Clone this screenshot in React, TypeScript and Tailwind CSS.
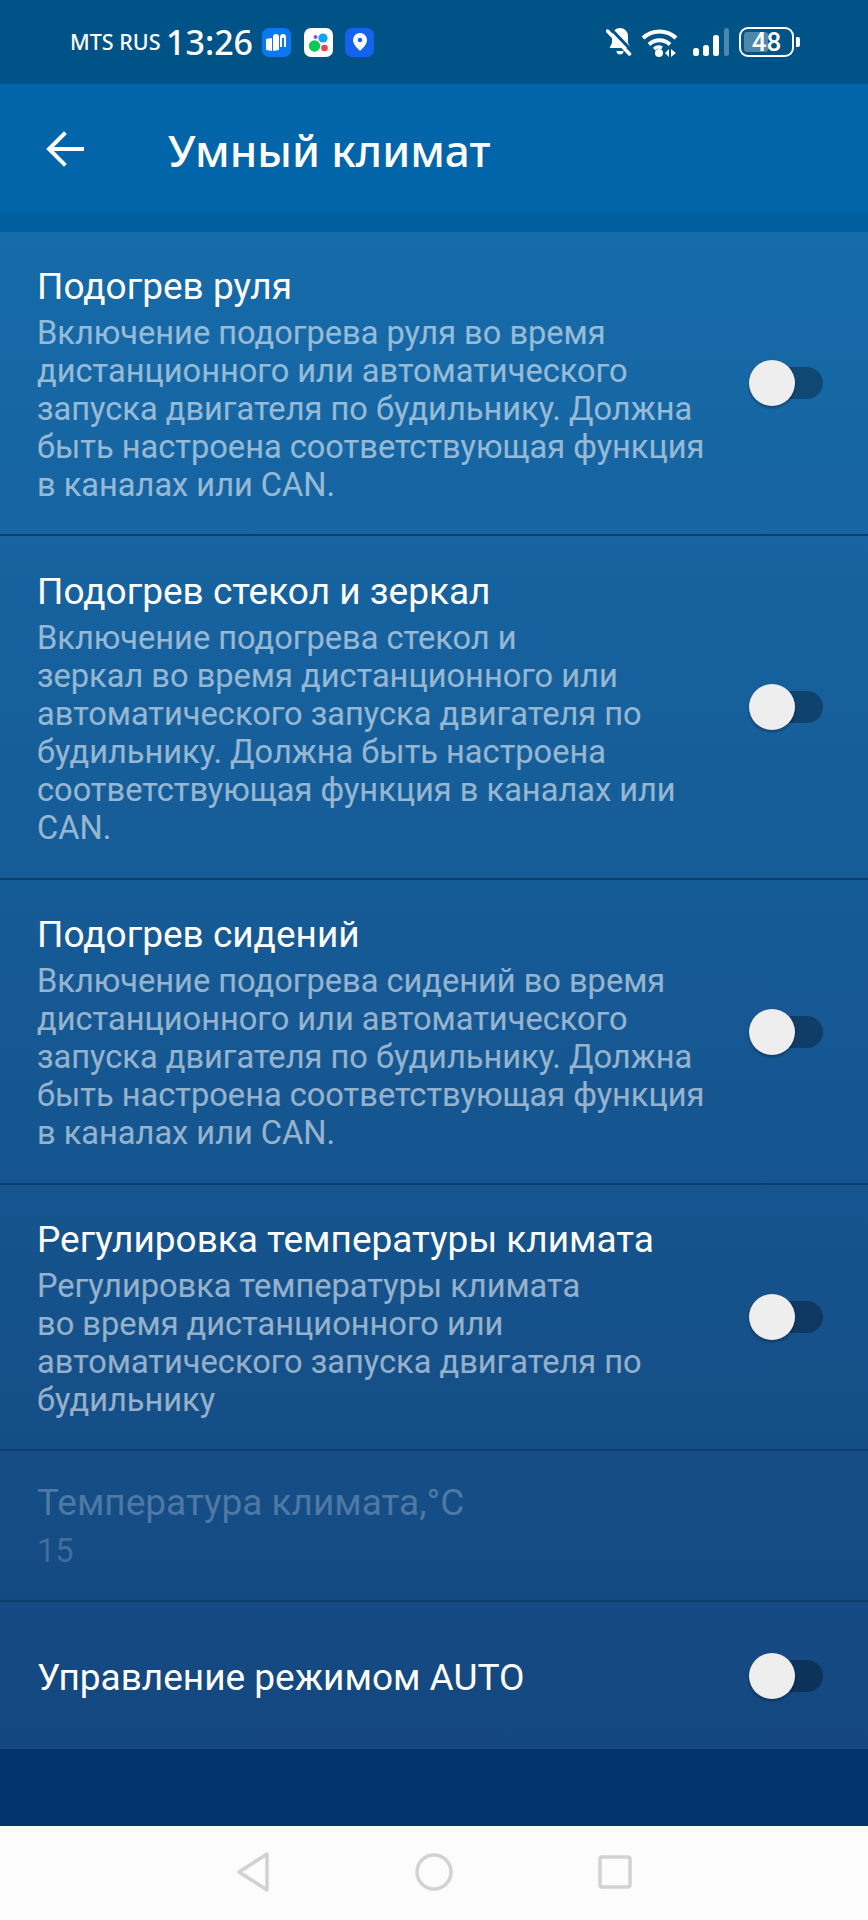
import React from 'react'

const font = { fontFamily: '"Roboto", "Noto Sans", sans-serif' }

function Toggle() {
  return (
    <div className="relative w-[74px] h-[32px] shrink-0 rounded-full bg-black/30">
      <div className="absolute left-0 top-[-7px] w-[46px] h-[46px] rounded-full bg-[#eeeeee] shadow-[0_2px_3px_rgba(0,0,0,0.3)]" />
    </div>
  )
}

function Row({ title, lines, rowClass }: { title: string; lines: string[]; rowClass: string }) {
  return (
    <div className={"flex items-center justify-between pl-[37px] pr-[45px] border-b-2 border-[#0f3d6d] " + rowClass}>
      <div className="pt-[2px]">
        <div className="text-[37px] leading-[44px] text-white">{title}</div>
        <div className="text-[32.6px] leading-[38px] text-white/55 mt-[5px]">
          {lines.map((l, i) => <div key={i} className="whitespace-nowrap">{l}</div>)}
        </div>
      </div>
      <Toggle />
    </div>
  )
}

function StatusBar() {
  return (
    <div className="h-[84px] bg-[#005387] flex items-start justify-between pl-[70px] pr-[68px] pt-[27px] text-white">
      <div className="flex items-center h-[30px]">
        <span className="text-[21.5px] w-[96px] font-medium whitespace-nowrap" style={{ fontFamily: '"Noto Sans", sans-serif' }}>MTS RUS</span>
        <span className="text-[34px] w-[96px] font-medium" style={{ fontFamily: '"Noto Sans", sans-serif' }}>13:26</span>
        <div className="flex gap-[12.5px]">
          <div className="w-[29px] h-[29px] rounded-[7px] bg-[#0a78f0] flex items-center justify-center">
            <svg width="21" height="17" viewBox="0 0 21 17" fill="#fff">
              <path d="M0 5l6-1v13l-6-1z" />
              <path d="M7 3a3 3 0 0 1 6 0v13l-6 1z" />
              <path d="M14 3a3 3 0 0 1 6 0v10h-2V4h-2v9h-2z" />
            </svg>
          </div>
          <div className="w-[29px] h-[29px] rounded-[7px] bg-white">
            <svg width="29" height="29" viewBox="0 0 29 29">
              <circle cx="19" cy="10" r="4.6" fill="#0aa5f5" />
              <circle cx="10.500" cy="18" r="5.700" fill="#10c85a" />
              <circle cx="20.500" cy="20" r="3.300" fill="#f53c4b" />
              <circle cx="11.500" cy="9" r="2" fill="#8a50dc" />
            </svg>
          </div>
          <div className="w-[29px] h-[29px] rounded-[7px] bg-[#1463ee] flex items-center justify-center">
            <svg width="14" height="18" viewBox="0 0 14 18">
              <path d="M7 0a7 7 0 0 1 7 7c0 4-4 8-7 11C4 15 0 11 0 7a7 7 0 0 1 7-7z" fill="#fff" />
              <circle cx="7" cy="7" r="2.300" fill="#1463ee" />
            </svg>
          </div>
        </div>
      </div>
      <div className="flex items-center h-[30px]">
        <svg width="26" height="30" viewBox="0 0 26 30" fill="#fff" className="mr-[9px]">
          <path d="M14 1a8 8 0 0 1 8 8v7l2.500 5H3.500L6 16V9a8 8 0 0 1 8-8z" />
          <path d="M10.500 24h7a3.500 3.500 0 0 1-7 0z" />
          <path d="M3 0l24 25" stroke="#005387" strokeWidth="3" />
          <path d="M1.500 4l22 23" stroke="#fff" strokeWidth="3.500" strokeLinecap="round" />
        </svg>
        <svg width="37" height="30" viewBox="0 0 37 30" fill="none" stroke="#fff" strokeWidth="4" className="mr-[15px]">
          <path d="M2 11a24 24 0 0 1 33 0" />
          <path d="M8 17.500a15 15 0 0 1 21 0" />
          <path d="M13 22a7 7 0 0 1 8-1" strokeWidth="3.500" />
          <circle cx="18" cy="26" r="4" fill="#fff" stroke="none" />
          <path d="M28 22v8l-4-4zM30 22v8l5-4z" fill="#fff" stroke="none" />
        </svg>
        <svg width="36" height="30" viewBox="0 0 36 30" fill="#fff" className="mr-[10px]">
          <rect x="0" y="21" width="6" height="8" rx="2.500" />
          <rect x="10" y="18" width="6" height="11" rx="2.500" />
          <rect x="20" y="8" width="6" height="21" rx="2.500" />
          <rect x="31" y="1" width="5" height="28" rx="2.500" fillOpacity="0.3" />
        </svg>
        <div className="relative w-[55px] h-[30px] rounded-[9px] border-[2.500px] border-white overflow-hidden flex items-center justify-center">
          <div className="absolute left-[3px] top-[3px] bottom-[3px] w-[24px] rounded-[3px] bg-white/30" />
          <span className="relative text-[26px] font-medium leading-none" style={font}>48</span>
        </div>
        <div className="w-[4px] h-[10px] ml-[2px] rounded-r-[2px] bg-white" />
      </div>
    </div>
  )
}

function NavBar() {
  return (
    <div className="h-[94px] bg-[#fcfcfc] flex items-center justify-center gap-[145px] pb-[2px]">
      <svg width="34" height="42" viewBox="0 0 34 42" fill="none" stroke="#d2d2d2" strokeWidth="3.500" strokeLinejoin="round">
        <path d="M31 3v36L3 21z" />
      </svg>
      <svg width="38" height="38" viewBox="0 0 38 38" fill="none" stroke="#d2d2d2" strokeWidth="3.500">
        <circle cx="19" cy="19" r="17" />
      </svg>
      <svg width="34" height="34" viewBox="0 0 34 34" fill="none" stroke="#d2d2d2" strokeWidth="3.500" strokeLinejoin="round">
        <rect x="2" y="2" width="30" height="30" rx="2" />
      </svg>
    </div>
  )
}

export default function App() {
  return (
    <div className="w-[868px] h-[1920px] flex flex-col overflow-hidden" style={font}>
      <StatusBar />
      <div className="h-[129px] bg-[#0265aa] flex items-center pl-[44px] text-white">
        <svg width="42" height="38" viewBox="0 0 42 38" fill="none" stroke="#fff" strokeWidth="4" strokeLinecap="square" className="mr-[82px]">
          <path d="M38 19H6" />
          <path d="M20 4 5 19l15 15" />
        </svg>
        <span className="text-[44px] font-medium mt-[2px]" style={{ fontFamily: '"Noto Sans", sans-serif' }}>Умный климат</span>
      </div>
      <div className="h-[19px] bg-[#015f9f]" />

      <div className="bg-gradient-to-b from-[#166ba9] to-[#14477f]">
        <Row
          title="Подогрев руля"
          rowClass="h-[304px]"
          lines={[
            'Включение подогрева руля во время',
            'дистанционного или автоматического',
            'запуска двигателя по будильнику. Должна',
            'быть настроена соответствующая функция',
            'в каналах или CAN.',
          ]}
        />
        <Row
          title="Подогрев стекол и зеркал"
          rowClass="h-[344px]"
          lines={[
            'Включение подогрева стекол и',
            'зеркал во время дистанционного или',
            'автоматического запуска двигателя по',
            'будильнику. Должна быть настроена',
            'соответствующая функция в каналах или',
            'CAN.',
          ]}
        />
        <Row
          title="Подогрев сидений"
          rowClass="h-[305px]"
          lines={[
            'Включение подогрева сидений во время',
            'дистанционного или автоматического',
            'запуска двигателя по будильнику. Должна',
            'быть настроена соответствующая функция',
            'в каналах или CAN.',
          ]}
        />
        <Row
          title="Регулировка температуры климата"
          rowClass="h-[266px]"
          lines={[
            'Регулировка температуры климата',
            'во время дистанционного или',
            'автоматического запуска двигателя по',
            'будильнику',
          ]}
        />
        <div className="h-[151px] pl-[37px] flex flex-col justify-center border-b-2 border-[#0f3d6d]">
          <div className="text-[37px] leading-[44px] text-white/25">Температура климата,°C</div>
          <div className="text-[32.6px] leading-[38px] text-white/20 mt-[7px]">15</div>
        </div>
        <div className="h-[147px] pl-[37px] pr-[45px] flex items-center justify-between">
          <div className="text-[37px] leading-[44px] text-white mt-[5px]">Управление режимом AUTO</div>
          <Toggle />
        </div>
      </div>

      <div className="flex-1 bg-[#02356f]" />
      <NavBar />
    </div>
  )
}
